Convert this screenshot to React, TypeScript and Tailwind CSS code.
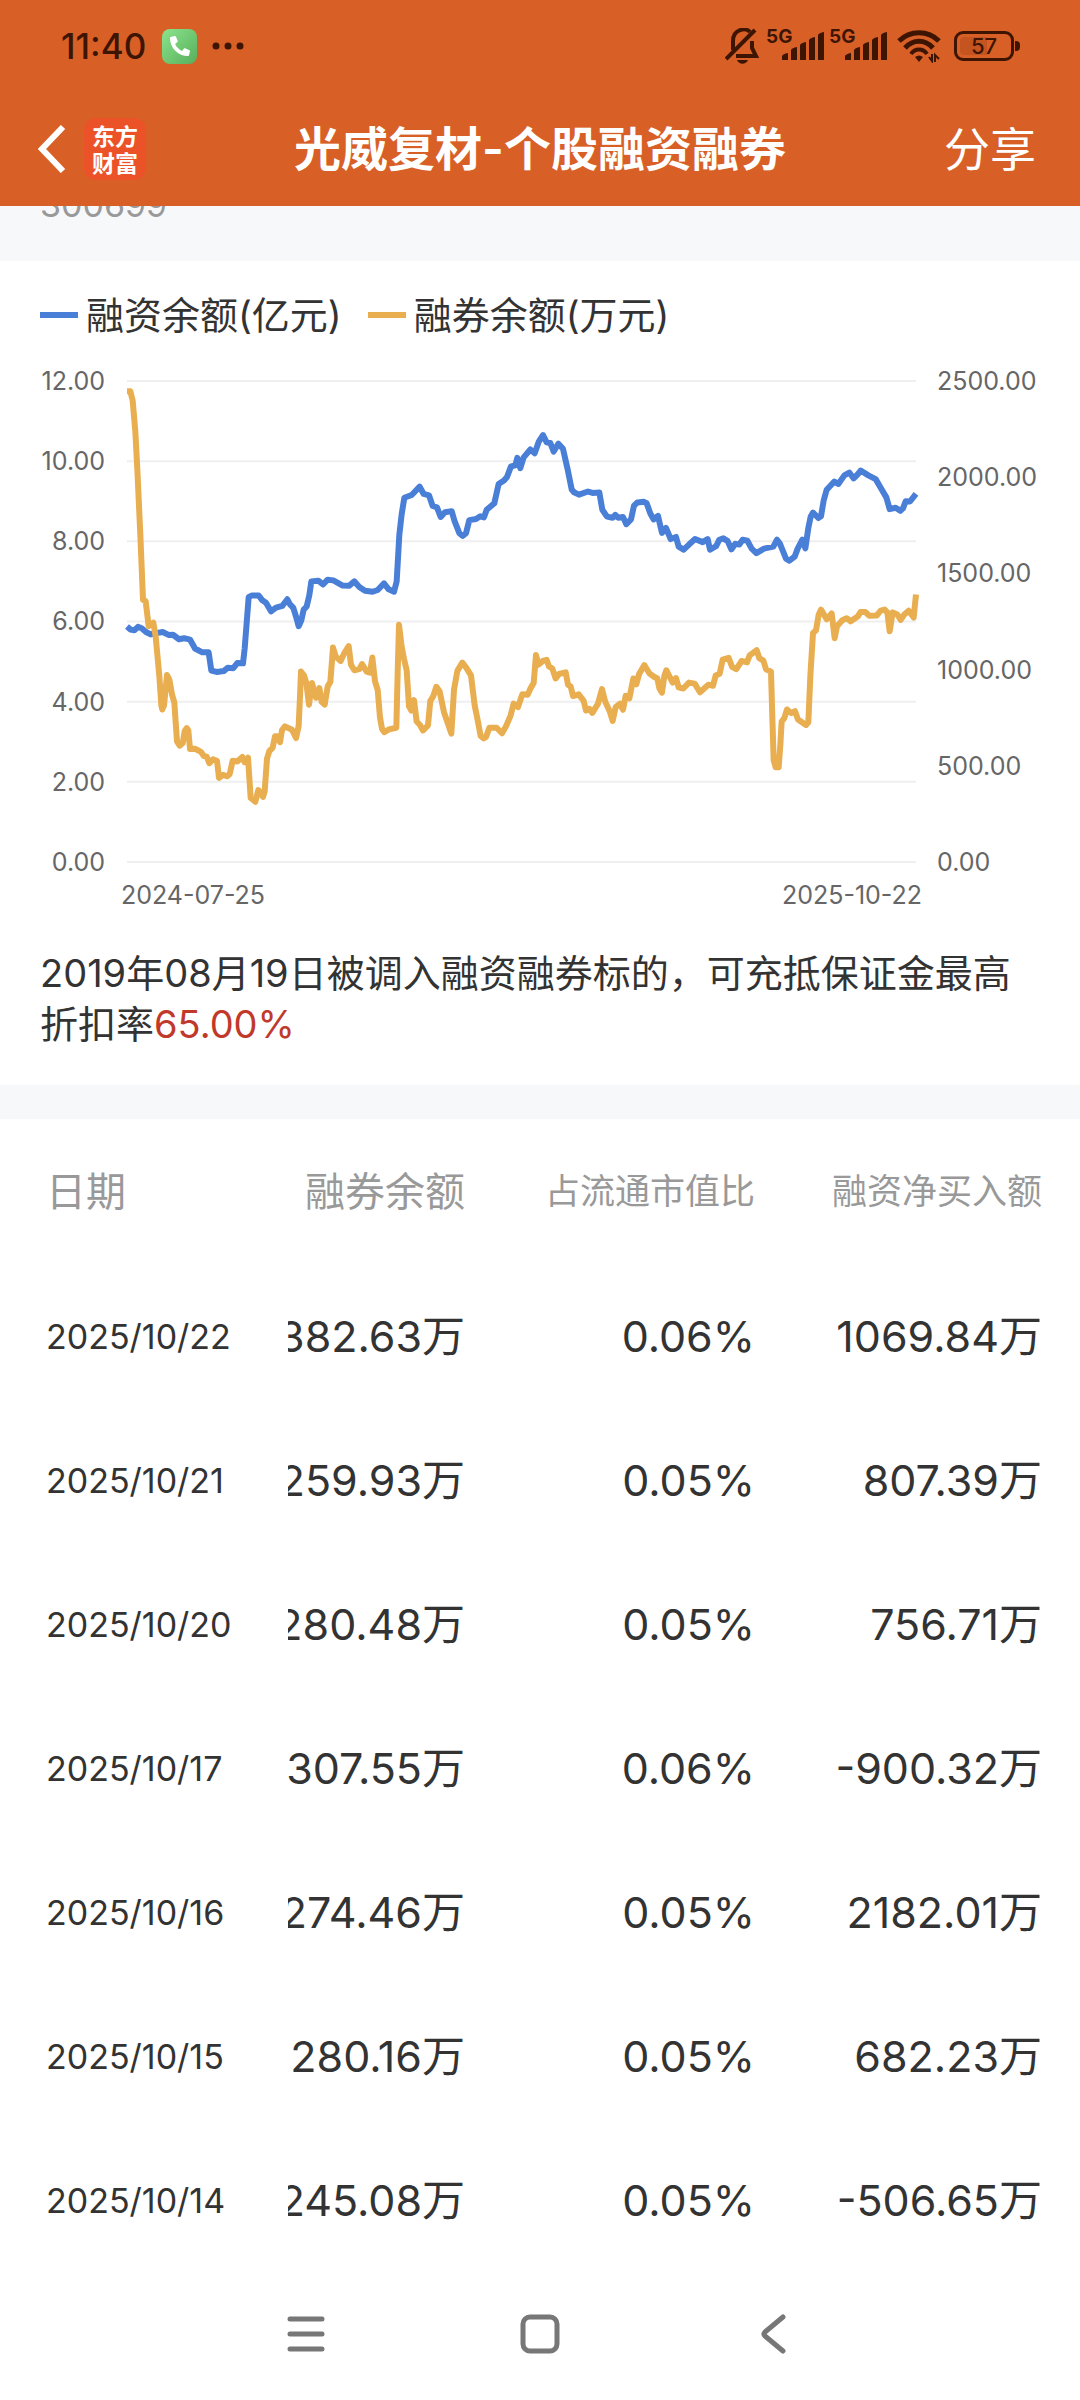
import { FaPhone } from 'react-icons/fa';

const rows = [
  { date: '2025/10/22', balance: '1382.63万', ratio: '0.06%', net: '1069.84万' },
  { date: '2025/10/21', balance: '1259.93万', ratio: '0.05%', net: '807.39万' },
  { date: '2025/10/20', balance: '1280.48万', ratio: '0.05%', net: '756.71万' },
  { date: '2025/10/17', balance: '1307.55万', ratio: '0.06%', net: '-900.32万' },
  { date: '2025/10/16', balance: '1274.46万', ratio: '0.05%', net: '2182.01万' },
  { date: '2025/10/15', balance: '1280.16万', ratio: '0.05%', net: '682.23万' },
  { date: '2025/10/14', balance: '1245.08万', ratio: '0.05%', net: '-506.65万' },
];

const leftAxis = ['12.00', '10.00', '8.00', '6.00', '4.00', '2.00', '0.00'];
const rightAxis = ['2500.00', '2000.00', '1500.00', '1000.00', '500.00', '0.00'];

// Plot units: 2367 wide, 1397 high, y grows downwards
const marginBalance =
  '0,713 11,722 22,724 33,714 44,718 57,729 71,736 84,733 107,729 126,738 138,737 156,750 171,747 189,751 204,777 226,788 245,788 253,841 269,845 291,842 302,833 319,834 331,819 348,820 353,777 365,628 374,623 395,623 406,637 417,644 432,669 447,658 466,653 481,634 489,649 499,659 507,684 515,712 523,695 530,664 539,655 547,622 553,582 574,580 588,591 602,577 619,579 647,594 666,595 682,582 697,598 714,609 737,612 752,607 ' +
  '771,588 785,605 801,612 809,582 817,447 824,387 832,339 854,331 878,307 890,328 906,332 917,363 930,367 941,395 954,381 974,378 983,408 997,442 1007,450 1017,442 1027,404 1047,401 1060,393 1071,396 1079,374 1102,355 1115,299 1131,289 1140,279 1152,248 1165,245 1171,223 1180,253 1190,222 1210,199 1223,210 1235,177 1248,157 1259,178 1270,180 1280,205 1294,182 1308,197 1322,257 1334,315 1341,323 1356,330 1383,321 1397,325 1417,324 1426,374 1440,394 1457,397 1465,389 1474,397 1488,395 1498,416 1512,402 1521,362 1531,353 1551,351 ' +
  '1559,355 1570,385 1580,402 1593,392 1605,441 1617,427 1631,459 1647,453 1655,481 1670,490 1686,475 1704,459 1727,468 1742,459 1749,490 1767,480 1777,461 1789,457 1802,465 1813,489 1825,473 1837,475 1847,461 1861,464 1874,487 1888,500 1911,487 1939,481 1950,461 1959,473 1977,516 1987,522 2003,510 2012,487 2026,461 2035,486 2044,427 2051,394 2058,382 2074,398 2082,393 2090,347 2099,316 2122,292 2134,299 2152,274 2167,266 2180,283 2192,271 2201,260 2224,274 2246,285 2261,310 2278,338 2288,372 2306,368 2320,377 2328,370 2336,349 2349,350 2367,328';

const shortBalance =
  '0,30 10,30 17,57 25,147 31,257 40,447 48,635 56,640 65,712 79,702 86,742 97,857 103,942 106,954 111,942 120,854 127,867 135,910 142,934 150,1047 158,1059 167,1052 173,1017 179,1008 184,1015 189,1069 204,1068 222,1077 230,1089 239,1091 247,1110 258,1099 270,1103 276,1153 288,1144 300,1148 308,1142 317,1103 331,1105 346,1092 353,1107 363,1094 371,1211 385,1222 394,1188 408,1208 413,1192 420,1097 427,1075 437,1065 444,1032 452,1032 459,1049 465,1014 474,1003 495,1013 507,1037 515,1002 519,917 522,844 531,855 538,877 546,940 555,877 567,920 577,892 584,932 593,940 602,887 610,874 618,774 626,800 641,813 652,790 665,770 672,824 682,840 697,837 705,822 719,844 729,847 736,803 744,872 752,897 ' +
  '759,977 765,1010 772,1020 786,1012 808,1007 812,847 816,708 824,772 831,807 839,840 846,945 853,957 861,927 869,989 879,999 888,1015 903,1000 910,929 919,915 928,888 938,902 951,962 973,1024 981,897 991,842 1006,818 1018,833 1032,855 1043,942 1052,985 1061,1031 1070,1038 1077,1034 1087,1007 1109,1007 1125,1023 1137,1003 1151,971 1160,937 1173,947 1186,910 1202,911 1211,892 1220,877 1227,796 1234,824 1249,812 1259,810 1266,829 1276,835 1286,864 1296,851 1316,846 1323,882 1331,887 1338,915 1355,910 1370,929 1377,957 1387,952 1396,964 1413,937 1425,895 1435,932 1448,959 1457,987 1466,947 1479,937 1488,955 1496,914 1507,922 1519,864 1528,881 1536,852 1552,825 ' +
  '1567,849 1581,859 1591,864 1597,892 1605,905 1612,857 1618,840 1627,857 1637,876 1647,863 1655,890 1669,893 1686,876 1703,879 1719,904 1744,882 1758,885 1766,855 1778,850 1787,809 1805,804 1815,830 1828,837 1844,813 1860,817 1868,797 1889,782 1897,805 1909,812 1917,837 1932,844 1936,977 1940,1102 1946,1122 1955,1122 1960,1057 1964,989 1972,979 1980,954 1992,964 2004,959 2013,983 2037,999 2044,991 2050,857 2058,732 2067,724 2075,679 2082,664 2099,692 2114,675 2123,747 2130,712 2146,695 2159,689 2171,698 2192,684 2201,671 2215,671 2227,682 2249,681 2261,667 2273,664 2281,672 2288,727 2297,672 2311,678 2321,694 2331,679 2345,667 2360,687 2367,620';

function BellOff() {
  return (
    <svg width="34" height="36" viewBox="0 0 34 36" fill="none" stroke="currentColor" strokeWidth="4">
      <path d="M1 31 L30 2" />
      <path d="M8 22 V13 C8 1 21 -1 25 4" />
      <path d="M27 13 V20 L31 28 H11" />
      <path d="M12 32 H23 C21 37 14 37 12 32 Z" fill="currentColor" stroke="none" />
    </svg>
  );
}

function Signal() {
  return (
    <div className="flex h-7 w-[57px] items-start">
      <span className="text-[19px] leading-[10px] font-bold">5G</span>
      <svg className="-ml-[10px] shrink-0" width="42" height="28" viewBox="0 3 42 28" fill="currentColor">
        <path d="M0 31 V27 Q1 25 6 24 V31 Z" />
        <path d="M9 31 V21 Q10 19 15 18 V31 Z" />
        <path d="M18 31 V16 Q19 14 24 13 V31 Z" />
        <path d="M27 31 V11 Q28 9 33 8 V31 Z" />
        <path d="M36 31 V6 Q37 4 42 3 V31 Z" />
      </svg>
    </div>
  );
}

function Wifi() {
  return (
    <svg width="44" height="34" viewBox="0 0 44 34" fill="none" stroke="currentColor" strokeWidth="5">
      <path d="M2 12 C13 1 31 1 42 12" />
      <path d="M8 19 C16 10 28 10 36 19" />
      <path d="M14 25 C18 19 26 19 30 25" strokeWidth="4" />
      <path d="M18 28 Q22 25 26 28 L22 33 Z" fill="currentColor" stroke="none" />
      <path d="M35 25 V32 L32 28 M38 33 V26 L42 30" strokeWidth="2" />
    </svg>
  );
}

function Battery() {
  return (
    <div className="flex items-center gap-px">
      <div className="flex h-[30px] w-[60px] rounded-[9px] border-3 border-current p-[3px]">
        <div className="grid flex-1 rounded-[4px] bg-[linear-gradient(90deg,#c45420_57%,transparent_57%)] text-center text-[22px] leading-[18px] font-medium">
          57
        </div>
      </div>
      <div className="h-[10px] w-[5px] rounded-r-[4px] bg-current" />
    </div>
  );
}

function StatusBar() {
  return (
    <div className="flex h-[92px] items-center justify-between pr-[60px] pl-[61px] text-[#3e1503]">
      <div className="flex items-center">
        <span className="text-[35px] leading-[40px] font-medium">11:40</span>
        <div className="ml-4 grid size-[35px] place-items-center rounded-[8px] bg-linear-to-br from-[#8be58c] to-[#58ae5c] text-white">
          <FaPhone className="size-5 -scale-x-100" />
        </div>
        <svg className="ml-[15px]" width="32" height="8" viewBox="0 0 32 8" fill="currentColor">
          <circle cx="4" cy="4" r="3.5" />
          <circle cx="16" cy="4" r="3.5" />
          <circle cx="28" cy="4" r="3.5" />
        </svg>
      </div>
      <div className="flex items-center">
        <BellOff />
        <div className="ml-[7px] flex gap-[6px]">
          <Signal />
          <Signal />
        </div>
        <div className="ml-[11px]">
          <Wifi />
        </div>
        <div className="ml-[13px]">
          <Battery />
        </div>
      </div>
    </div>
  );
}

function TitleBar() {
  return (
    <div className="grid h-[114px] grid-cols-[1fr_auto_1fr] items-center px-[38px] text-white">
      <div className="flex items-center gap-[18px]">
        <button aria-label="返回">
          <svg width="28" height="48" viewBox="0 0 28 48" fill="none" stroke="currentColor" strokeWidth="6">
            <path d="M25 2 L4 24 L25 46" />
          </svg>
        </button>
        <div className="grid size-[62px] place-content-center rounded-[12px] bg-[#ec5228] text-center font-['Noto_Sans_CJK_SC',sans-serif] text-[23px] leading-[27px] font-bold">
          <span>东方</span>
          <span>财富</span>
        </div>
      </div>
      <h1 className="text-[47px] leading-[60px] font-semibold">光威复材-个股融资融券</h1>
      <button className="mr-[6px] justify-self-end text-[46px] leading-[60px]">分享</button>
    </div>
  );
}

function Chart() {
  return (
    <section className="bg-white px-10 pt-[29px] pb-[35px]">
      <div className="flex gap-[26px] text-[38px] leading-[50px] text-[#333]">
        <div className="flex items-center gap-2">
          <span className="h-[6px] w-[38px] bg-[#4a7fd8]" />
          融资余额(亿元)
        </div>
        <div className="flex items-center gap-2">
          <span className="h-[6px] w-[38px] bg-[#e8ae50]" />
          融券余额(万元)
        </div>
      </div>

      <div className="mt-[41px] flex text-[25px] leading-[30px] text-[#666]">
        <div className="-mt-[15px] mr-[22px] flex h-[511px] w-[65px] flex-col justify-between text-right">
          {leftAxis.map((v) => (
            <span key={v}>{v}</span>
          ))}
        </div>
        <div className="flex-1">
          <svg className="block h-[481px] w-full overflow-visible" viewBox="0 0 2367 1397" preserveAspectRatio="none" fill="none">
            {leftAxis.map((v, i) => (
              <line key={v} x1="0" x2="2367" y1={(i * 1397) / 6} y2={(i * 1397) / 6} stroke="#efefef" strokeWidth="2" vectorEffect="non-scaling-stroke" />
            ))}
            <polyline points={marginBalance} stroke="#4a7fd8" strokeWidth="6" strokeLinejoin="round" vectorEffect="non-scaling-stroke" />
            <polyline points={shortBalance} stroke="#e8ae50" strokeWidth="6" strokeLinejoin="round" vectorEffect="non-scaling-stroke" />
          </svg>
          <div className="-mx-[6px] mt-[18px] flex justify-between">
            <span>2024-07-25</span>
            <span>2025-10-22</span>
          </div>
        </div>
        <div className="-mt-[15px] ml-[21px] flex h-[511px] w-[103px] flex-col justify-between">
          {rightAxis.map((v) => (
            <span key={v}>{v}</span>
          ))}
        </div>
      </div>

      <p className="mt-[38px] text-[38px] leading-[51px] text-[#333]">
        2019年08月19日被调入融资融券标的，可充抵保证金最高折扣率<span className="text-[#c0392b]">65.00%</span>
      </p>
    </section>
  );
}

function BalanceTable() {
  return (
    <table className="w-full table-fixed bg-white text-right text-[#333]">
      <thead>
        <tr className="h-[145px] text-[#999]">
          <th className="w-[288px] pl-[46px] text-left text-[40px] font-normal">日期</th>
          <th className="w-[177px] text-[40px] font-normal">融券余额</th>
          <th className="w-[290px] text-[35px] font-normal">占流通市值比</th>
          <th className="pr-[38px] text-[35px] font-normal">融资净买入额</th>
        </tr>
      </thead>
      <tbody>
        {rows.map((row) => (
          <tr key={row.date} className="h-[144px] text-[43px]">
            <td className="pl-[46px] text-left text-[34px]">{row.date}</td>
            {/* Column is scrolled sideways, the first digits are cut off */}
            <td>
              <div className="flex justify-end overflow-hidden whitespace-nowrap">
                <span className="shrink-0">{row.balance}</span>
              </div>
            </td>
            <td>{row.ratio}</td>
            <td className="pr-[38px]">{row.net}</td>
          </tr>
        ))}
      </tbody>
    </table>
  );
}

function NavBar() {
  return (
    <nav className="mx-auto grid h-[128px] w-[65%] grid-cols-3 place-items-center pb-1 text-[#777]">
      <button aria-label="最近任务">
        <svg width="38" height="38" viewBox="0 0 38 38" fill="none" stroke="currentColor" strokeWidth="5" strokeLinecap="round">
          <path d="M3 4 H35 M3 19 H35 M3 34 H35" />
        </svg>
      </button>
      <button aria-label="主页">
        <svg width="40" height="40" viewBox="0 0 40 40" fill="none" stroke="currentColor" strokeWidth="5">
          <rect x="3" y="3" width="34" height="34" rx="7" />
        </svg>
      </button>
      <button aria-label="返回上一页">
        <svg width="26" height="40" viewBox="0 0 26 40" fill="none" stroke="currentColor" strokeWidth="5" strokeLinecap="round" strokeLinejoin="round">
          <path d="M22 3 L4 18 Q2 20 4 22 L22 37" />
        </svg>
      </button>
    </nav>
  );
}

export default function App() {
  return (
    <div className="min-h-screen bg-white font-['Inter','Noto_Sans_CJK_SC',sans-serif]">
      <header className="bg-[#d86027]">
        <StatusBar />
        <TitleBar />
      </header>
      {/* Stock code, mostly scrolled under the header */}
      <div className="h-[55px] overflow-hidden bg-[#f7f8fa] pl-10">
        <div className="-mt-6 text-[34px] leading-[46px] text-[#999]">300699</div>
      </div>
      <Chart />
      <div className="h-[34px] bg-[#f7f8fa]" />
      <BalanceTable />
      <NavBar />
    </div>
  );
}
